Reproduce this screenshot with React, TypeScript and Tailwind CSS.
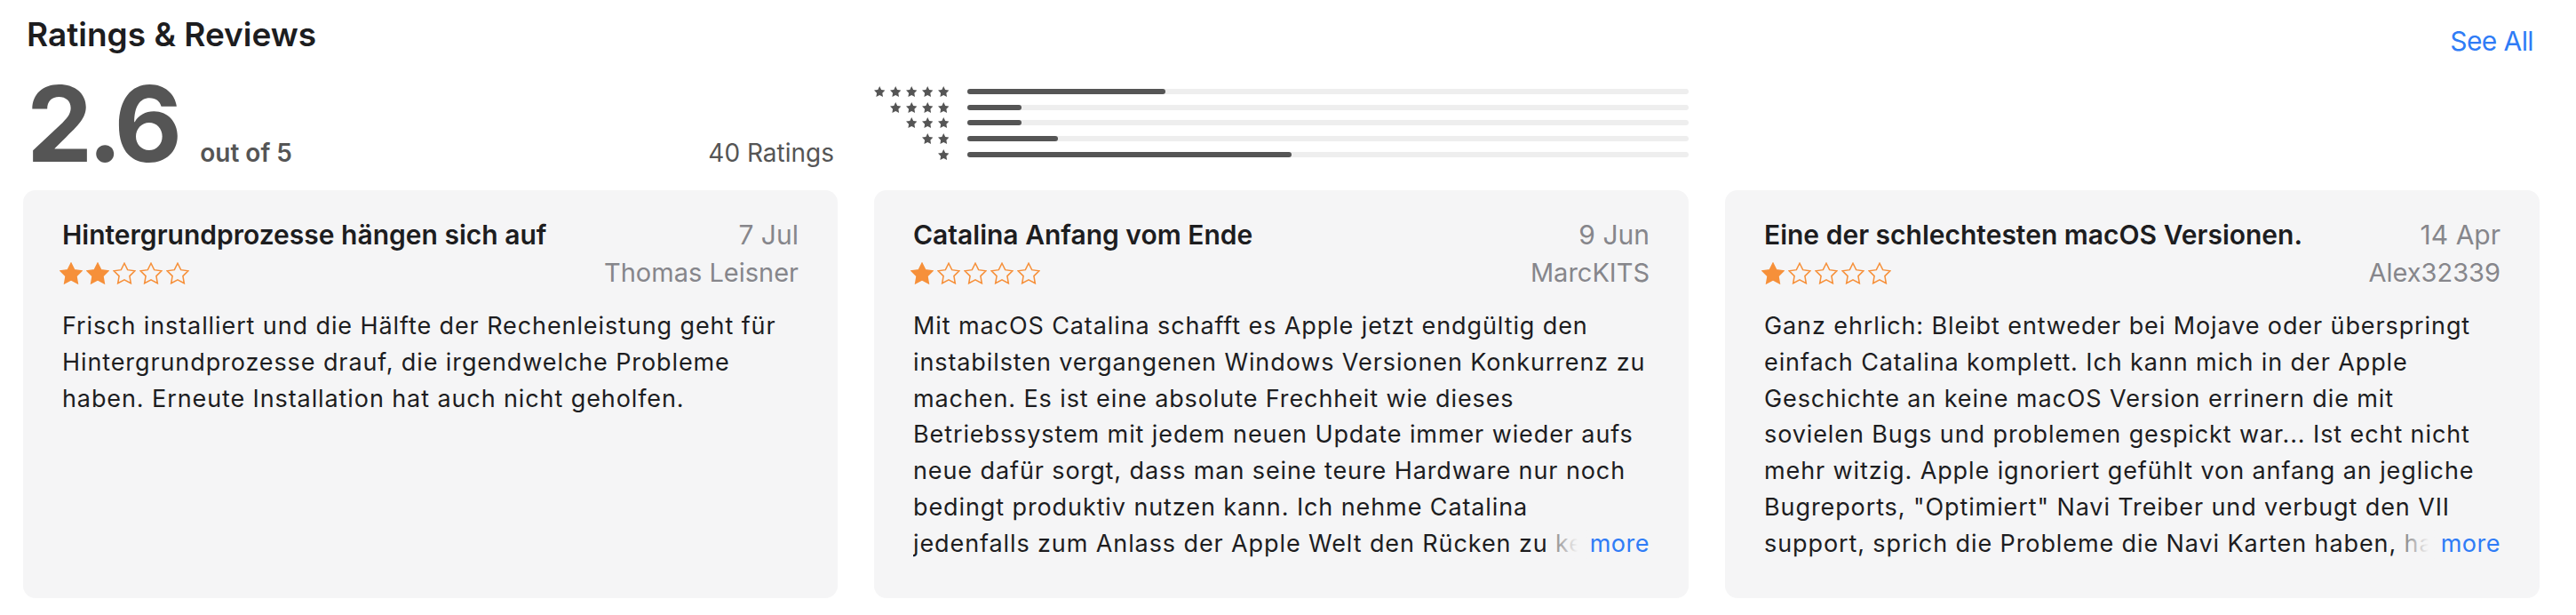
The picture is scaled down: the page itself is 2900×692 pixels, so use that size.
const STAR_POINTS =
  "12 2 15.09 8.26 22 9.27 17 14.14 18.18 21.02 12 17.77 5.82 21.02 7 14.14 2 9.27 8.91 8.26";

const histogram = [
  { stars: 5, count: 11 },
  { stars: 4, count: 3 },
  { stars: 3, count: 3 },
  { stars: 2, count: 5 },
  { stars: 1, count: 18 },
];
const total = 40;

const reviews = [
  {
    title: "Hintergrundprozesse hängen sich auf",
    date: "7 Jul",
    author: "Thomas Leisner",
    rating: 2,
    more: false,
    lines: [
      "Frisch installiert und die Hälfte der Rechenleistung geht für",
      "Hintergrundprozesse drauf, die irgendwelche Probleme",
      "haben. Erneute Installation hat auch nicht geholfen.",
    ],
  },
  {
    title: "Catalina Anfang vom Ende",
    date: "9 Jun",
    author: "MarcKITS",
    rating: 1,
    more: true,
    lines: [
      "Mit macOS Catalina schafft es Apple jetzt endgültig den",
      "instabilsten vergangenen Windows Versionen Konkurrenz zu",
      "machen. Es ist eine absolute Frechheit wie dieses",
      "Betriebssystem mit jedem neuen Update immer wieder aufs",
      "neue dafür sorgt, dass man seine teure Hardware nur noch",
      "bedingt produktiv nutzen kann. Ich nehme Catalina",
      "jedenfalls zum Anlass der Apple Welt den Rücken zu kehren.",
    ],
  },
  {
    title: "Eine der schlechtesten macOS Versionen.",
    date: "14 Apr",
    author: "Alex32339",
    rating: 1,
    more: true,
    lines: [
      "Ganz ehrlich: Bleibt entweder bei Mojave oder überspringt",
      "einfach Catalina komplett. Ich kann mich in der Apple",
      "Geschichte an keine macOS Version errinern die mit",
      "sovielen Bugs und problemen gespickt war... Ist echt nicht",
      "mehr witzig. Apple ignoriert gefühlt von anfang an jegliche",
      'Bugreports, "Optimiert" Navi Treiber und verbugt den VII',
      "support, sprich die Probleme die Navi Karten haben, hat man",
    ],
  },
];

function SmallStar() {
  return (
    <svg viewBox="2 2 20 19.02" className="h-[12px] w-[12.5px] fill-[#555]">
      <polygon points={STAR_POINTS} />
    </svg>
  );
}

function OrangeStar({ filled }: { filled: boolean }) {
  return (
    <svg
      viewBox="1 1 22 21"
      className={
        filled
          ? "h-[25px] w-[26px] fill-[#f6903a] stroke-[#f6903a] stroke-[1.3]"
          : "h-[25px] w-[26px] fill-none stroke-[#f6903a] stroke-[1.3]"
      }
    >
      <polygon points={STAR_POINTS} />
    </svg>
  );
}

function ReviewCard({ review }: { review: (typeof reviews)[number] }) {
  return (
    <div className="rounded-[14px] bg-[#f5f5f6] px-[44px] pt-[32px] pb-[40px]">
      <div className="flex items-baseline justify-between gap-4">
        <h3 className="truncate text-[30px] leading-[36px] font-semibold text-[#1d1d1f]">
          {review.title}
        </h3>
        <span className="shrink-0 text-[30px] leading-[36px] text-[#86868b]">{review.date}</span>
      </div>
      <div className="mt-[7px] flex items-center justify-between">
        <div className="-ml-[3px] flex gap-[4px]">
          {[1, 2, 3, 4, 5].map((i) => (
            <OrangeStar key={i} filled={i <= review.rating} />
          ))}
        </div>
        <span className="text-[29px] leading-[36px] text-[#86868b]">{review.author}</span>
      </div>
      <div className="relative mt-[22px] overflow-hidden text-[27px] leading-[40.8px] tracking-[0.9px] text-[#1d1d1f]">
        {review.lines.map((line, i) => (
          <div key={i} className="whitespace-nowrap">
            {line}
          </div>
        ))}
        {review.more && (
          <span className="absolute right-0 bottom-0 flex">
            <span className="w-[46px] bg-linear-to-r from-[#f5f5f6]/40 to-[#f5f5f6] to-70%" />
            <span className="bg-[#f5f5f6] tracking-[0.5px] text-[#2f7cf6]">more</span>
          </span>
        )}
      </div>
    </div>
  );
}

export default function App() {
  return (
    <div className="h-[692px] w-[2900px] bg-white pr-[41px] pl-[26px] font-['Inter',sans-serif] text-[#1d1d1f] antialiased">
      <div className="flex h-[58px] items-start justify-between pt-[19px] pl-[4px]">
        <h2 className="text-[37px] leading-[40px] font-semibold text-[#1d1d1f]">Ratings &amp; Reviews</h2>
        <a className="mt-[7px] mr-[7px] text-[30px] leading-[40px] tracking-[-0.02em] text-[#2f7cf6]">See All</a>
      </div>

      <div className="mt-[22px] grid grid-cols-3 gap-x-[41px]">
        <div className="flex items-baseline justify-between px-[4px]">
          <div className="flex items-baseline">
            <span className="text-[118px] leading-[118px] font-bold tracking-[-0.05em] text-[#555]">2.6</span>
            <span className="ml-[26px] text-[28px] font-semibold text-[#555]">out of 5</span>
          </div>
          <span className="text-[28px] text-[#555]">40 Ratings</span>
        </div>
        <div className="flex flex-col pt-[14px]">
          {histogram.map((row) => (
            <div key={row.stars} className="flex h-[17.8px] items-center">
              <div className="flex w-[84px] shrink-0 justify-end gap-[5.5px]">
                {Array.from({ length: row.stars }).map((_, i) => (
                  <SmallStar key={i} />
                ))}
              </div>
              <div className="ml-[21px] h-[6px] flex-1 rounded-full bg-[#eeeeee]">
                <div
                  className="h-full rounded-full bg-[#555]"
                  style={{ width: `${(row.count / total) * 100}%` }}
                />
              </div>
            </div>
          ))}
        </div>
      </div>

      <div className="mt-[16px] grid grid-cols-3 gap-x-[41px]">
        {reviews.map((r) => (
          <ReviewCard key={r.title} review={r} />
        ))}
      </div>
    </div>
  );
}
